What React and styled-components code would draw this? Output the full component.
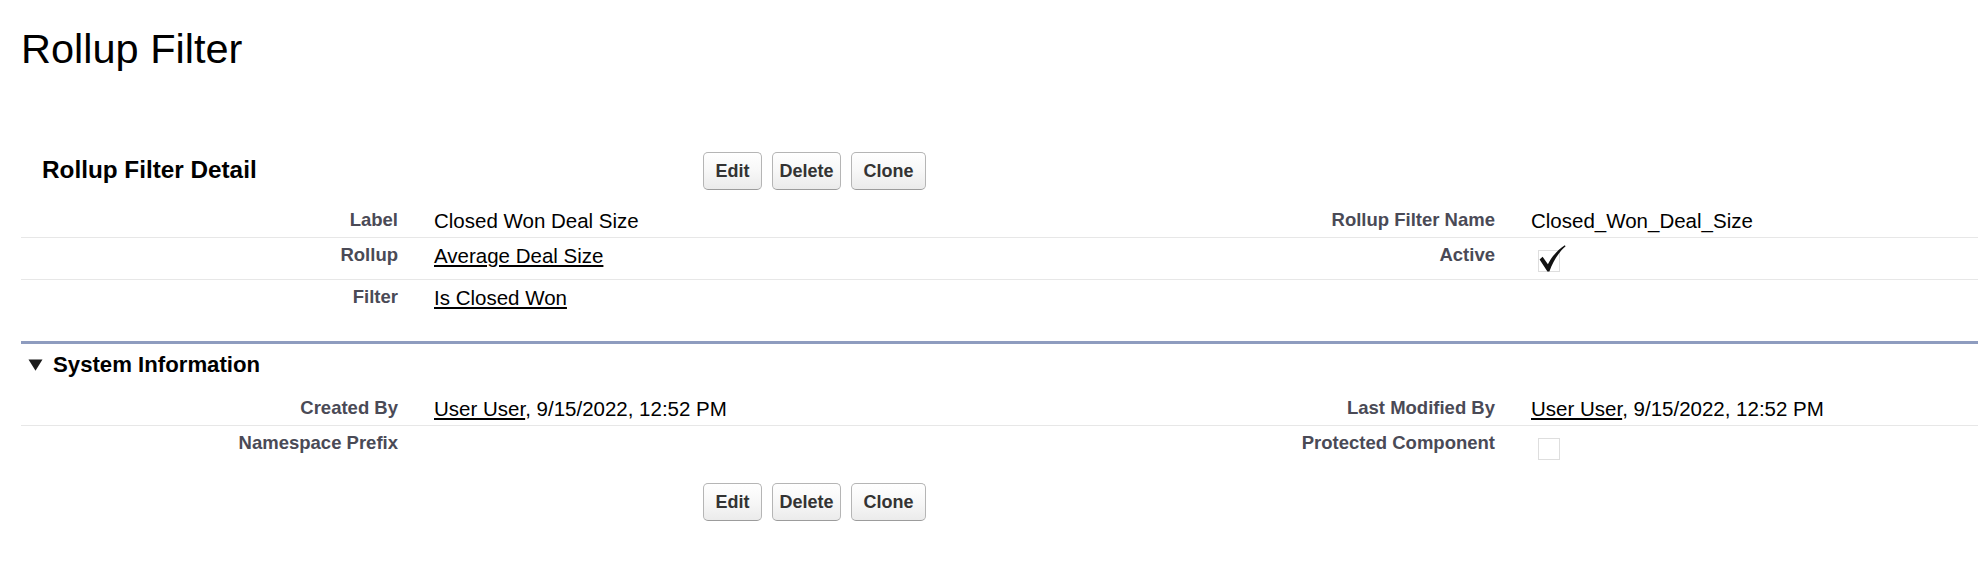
import React from "react";
import styled, { createGlobalStyle } from "styled-components";

const GlobalStyle = createGlobalStyle`
  html, body {
    margin: 0;
    padding: 0;
    background: #ffffff;
  }
  body {
    font-family: "Liberation Sans", Arial, Helvetica, sans-serif;
    color: #000000;
  }
`;

const Page = styled.div`
  padding-left: 21px;
  overflow: hidden;
`;

const PageTitle = styled.h1`
  margin: 25px 0 0 0;
  font-size: 41.5px;
  line-height: 48px;
  font-weight: 400;
  color: #000;
`;

const Block = styled.section`
  margin-top: ${(p) => p.$top || 0}px;
`;

const BlockHeader = styled.div`
  display: flex;
  align-items: center;
  height: 38px;
  margin-top: ${(p) => p.$top || 0}px;
`;

const TitleCell = styled.div`
  width: 682px;
  box-sizing: border-box;
  padding-left: 21px;
  flex: none;
`;

const BlockTitle = styled.h2`
  margin: 0 0 2px 0;
  font-size: 24.3px;
  line-height: 36px;
  font-weight: 700;
  color: #000;
`;

const ButtonGroup = styled.div`
  display: flex;
  gap: 10px;
`;

const Button = styled.button`
  width: ${(p) => p.$w}px;
  height: 38px;
  box-sizing: border-box;
  padding: 0;
  font-family: "Liberation Sans", Arial, Helvetica, sans-serif;
  font-size: 18px;
  line-height: 36px;
  font-weight: 700;
  color: #333333;
  text-align: center;
  background: linear-gradient(#ffffff 0%, #f7f7f7 50%, #ebebeb 100%);
  border: 1px solid #b5b5b5;
  border-bottom-color: #9c9c9c;
  border-radius: 5px;
  cursor: pointer;
`;

const DetailGrid = styled.div`
  display: grid;
  grid-template-columns: 395px 702px 395px 1fr;
  margin-top: ${(p) => p.$top || 0}px;
`;

const LabelCell = styled.div`
  box-sizing: border-box;
  padding: 5.5px 18px 5.5px 0;
  text-align: right;
  font-size: 18.5px;
  line-height: 21px;
  font-weight: 700;
  color: #4a4a56;
  border-bottom: ${(p) => (p.$last ? "none" : "1px solid #e7e7e7")};
`;

const ValueCell = styled.div`
  box-sizing: border-box;
  padding: 5.5px 0 5.5px 18px;
  font-size: 20.5px;
  line-height: 23px;
  color: #000;
  border-bottom: ${(p) => (p.$last ? "none" : "1px solid #e7e7e7")};
`;

const Link = styled.a`
  color: #000;
  text-decoration: underline;
  text-decoration-thickness: 1.5px;
  text-underline-offset: 2px;
  cursor: pointer;
`;

const SubHeader = styled.div`
  display: flex;
  align-items: center;
  margin-top: ${(p) => p.$top || 0}px;
  border-top: 3px solid #8e9cbf;
  padding: 8px 0 14px 7px;
`;

const Twisty = styled.svg`
  display: block;
  width: 15px;
  height: 12px;
  margin-right: 10px;
  flex: none;
`;

const SubTitle = styled.h3`
  margin: 0;
  font-size: 22.2px;
  line-height: 25px;
  font-weight: 700;
  color: #000;
`;

const CheckSvg = styled.svg`
  display: block;
  width: 36px;
  height: 30px;
`;

function CheckboxImg({ checked }) {
  return (
    <CheckSvg viewBox="0 0 36 30">
      <rect
        x="7.5"
        y="6.5"
        width="21"
        height="21"
        fill="none"
        stroke="#bdbdbd"
        strokeWidth="1"
        strokeDasharray="1 1"
      />
      {checked && (
        <path
          d="M8.6 15.4 L11.6 12.8 L16.9 20.2 C21 12.2 27 5.6 33.8 1.2 L34.6 2.3 C28.4 7.6 22.4 16.2 18.4 27.6 L16.4 27.6 Z"
          fill="#111"
        />
      )}
    </CheckSvg>
  );
}

function HeaderRow({ title, top }) {
  return (
    <BlockHeader $top={top}>
      <TitleCell>{title && <BlockTitle>{title}</BlockTitle>}</TitleCell>
      <ButtonGroup>
        <Button $w={59}>Edit</Button>
        <Button $w={69}>Delete</Button>
        <Button $w={75}>Clone</Button>
      </ButtonGroup>
    </BlockHeader>
  );
}

function Rows({ rows, top }) {
  return (
    <DetailGrid $top={top}>
      {rows.map((r, i) => {
        const last = i === rows.length - 1;
        return (
          <React.Fragment key={i}>
            <LabelCell $last={last}>{r.l1}</LabelCell>
            <ValueCell $last={last}>{r.v1}</ValueCell>
            <LabelCell $last={last}>{r.l2}</LabelCell>
            <ValueCell $last={last}>{r.v2}</ValueCell>
          </React.Fragment>
        );
      })}
    </DetailGrid>
  );
}

const detailRows = [
  {
    l1: "Label",
    v1: "Closed Won Deal Size",
    l2: "Rollup Filter Name",
    v2: "Closed_Won_Deal_Size",
  },
  {
    l1: "Rollup",
    v1: <Link>Average Deal Size</Link>,
    l2: "Active",
    v2: <CheckboxImg checked />,
  },
  {
    l1: "Filter",
    v1: <Link>Is Closed Won</Link>,
    l2: "",
    v2: "",
  },
];

const systemRows = [
  {
    l1: "Created By",
    v1: (
      <>
        <Link>User User</Link>, 9/15/2022, 12:52 PM
      </>
    ),
    l2: "Last Modified By",
    v2: (
      <>
        <Link>User User</Link>, 9/15/2022, 12:52 PM
      </>
    ),
  },
  {
    l1: "Namespace Prefix",
    v1: "",
    l2: "Protected Component",
    v2: <CheckboxImg />,
  },
];

export default function App() {
  return (
    <>
      <GlobalStyle />
      <Page>
        <PageTitle>Rollup Filter</PageTitle>
        <Block>
          <HeaderRow title="Rollup Filter Detail" top={79} />
          <Rows rows={detailRows} top={13} />
          <SubHeader $top={27}>
            <Twisty viewBox="0 0 15 12">
              <path d="M0.5 0.5 L14.5 0.5 L7.5 11.8 Z" fill="#1a1a1a" />
            </Twisty>
            <SubTitle>System Information</SubTitle>
          </SubHeader>
          <Rows rows={systemRows} />
          <HeaderRow top={16} />
        </Block>
      </Page>
    </>
  );
}
